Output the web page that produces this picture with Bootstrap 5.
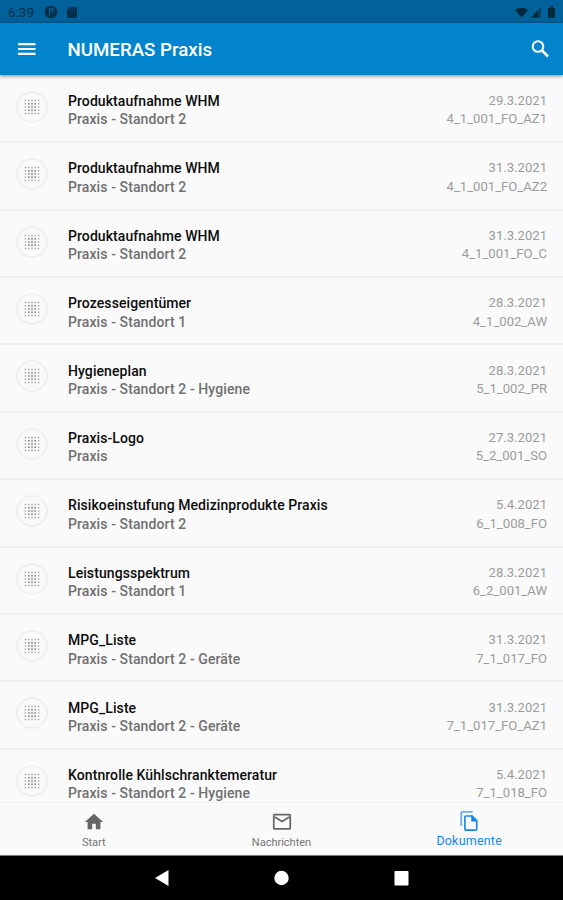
<!DOCTYPE html>
<html lang="de">
<head>
<meta charset="utf-8">
<meta name="viewport" content="width=device-width, initial-scale=1">
<title>NUMERAS Praxis</title>
<link href="https://cdn.jsdelivr.net/npm/bootstrap@5.3.0/dist/css/bootstrap.min.css" rel="stylesheet">
<style>
body{font-family:Roboto,"Liberation Sans",sans-serif;background:#fafafa;color:#111}
svg{display:block;flex:none}
.status{height:23px;background:#01619a;color:#04304a;font-size:13.5px;padding:1px 7px 0 8px}
.topbar{height:52px;background:#0284cd;box-shadow:0 1px 4px rgba(0,0,0,.5);padding:0 13px 0 16px;z-index:2}
.topbar h1{font-size:18.7px;font-weight:500;margin-left:31.5px;padding-top:2.5px}
.docs{padding-top:.9px}
.doc{height:67.4px;border-bottom:2px solid #f0f0f0;padding:16.2px 16px 0 16px;font-size:14px;line-height:18.3px}
.doc svg{margin-right:20px;margin-top:-1.2px}
.name{font-weight:500;color:#0c0c0c;letter-spacing:.08px}
.place{font-weight:500;color:#707070;letter-spacing:.1px}
.meta{color:#9c9c9c;font-size:13.1px}
.tabs{height:53px;border-top:1px solid #f1f1f1;background:#fafafa;font-size:11px}
.tabs a{color:#757575;line-height:14px;padding-top:8px}
.tabs a span{margin-top:2.5px}
.tabs a.active{color:#1686e8;font-size:12.5px;letter-spacing:.2px;padding-top:7px}
.tabs a.active span{margin-top:2px}
.sysnav{height:45px;background:#000;border-top:1px solid #777}
.sysnav svg{margin:0 49.5px 0}
</style>
<script src="https://cdn.jsdelivr.net/npm/bootstrap@5.3.0/dist/js/bootstrap.bundle.min.js"></script>
</head>
<body class="vh-100 overflow-hidden d-flex flex-column">
<svg class="d-none"><symbol id="doc-icon" viewBox="0 0 32 32"><circle cx="16" cy="16" r="15" fill="#fafafa" stroke="#f0f0f0" stroke-width="2"/><g stroke="#a6a6a6" stroke-width="1.4" stroke-dasharray="1.4 1.9"><path d="M8.700 9.500h15M8.700 12.700h15M8.700 16h15M8.700 19.200h15M8.700 22.500h15"/></g><path d="M12 12.700h8M12 16h8M12 19.200h8" stroke="#858585" stroke-width="1.400" stroke-dasharray="1.400 1.900"/><path d="M16 10v12M12 16h8" stroke="#c4c4c4" stroke-width=".8"/></symbol></svg>

<div class="status flex-shrink-0 d-flex align-items-center">
  <span>6:39</span>
  <svg class="ms-2" width="16" height="14" viewBox="-2 0 16 14"><circle cx="7" cy="7" r="6.300" fill="#042f48"/><path d="M5.500 10.500V4H9v2.500H7" fill="none" stroke="#01619a" stroke-width="1.300"/></svg>
  <svg class="ms-2" width="12" height="13" viewBox="0 0 12 13"><path d="M4 1h6q1 0 1 1v9q0 1-1 1H2q-1 0-1-1V4z" fill="#042f48"/><path d="M4.500 2.500v2M6.500 2.500v2M8.500 2.500v2" stroke="#01619a" stroke-width=".6"/></svg>
  <svg class="ms-auto" width="42" height="13" viewBox="0 0 42 13"><path d="M1 4Q7.500-.5 14 4L7.500 11.500z" fill="#042a3a"/><path d="M17 11.500 27 1v10.500z" fill="#034369"/><path d="M17 11.500 24 4.300v7.200z" fill="#042a3a"/><path d="M34 2H36V.5h3V2H41v10h-7z" fill="#042a3a"/></svg>
</div>
<header class="topbar flex-shrink-0 position-relative d-flex align-items-center text-white">
  <svg width="20" height="14" viewBox="0 0 20 14"><path d="M2 2.200h17.500M2 7h17.500M2 11.800h17.500" stroke="#fff" stroke-width="2.200"/></svg>
  <h1 class="mb-0">NUMERAS Praxis</h1>
  <svg class="ms-auto" width="20" height="20" viewBox="0 0 20 20" fill="none" stroke="#fff"><circle cx="8" cy="7.500" r="5.300" stroke-width="2"/><path d="m12 11.500 6 6" stroke-width="2.500"/></svg>
</header>

<main class="docs flex-grow-1 overflow-hidden">
  <div class="doc d-flex"><svg width="32" height="32"><use href="#doc-icon"/></svg><div><div class="name">Produktaufnahme WHM</div><div class="place">Praxis - Standort 2</div></div><div class="meta ms-auto text-end"><div>29.3.2021</div><div>4_1_001_FO_AZ1</div></div></div>
  <div class="doc d-flex"><svg width="32" height="32"><use href="#doc-icon"/></svg><div><div class="name">Produktaufnahme WHM</div><div class="place">Praxis - Standort 2</div></div><div class="meta ms-auto text-end"><div>31.3.2021</div><div>4_1_001_FO_AZ2</div></div></div>
  <div class="doc d-flex"><svg width="32" height="32"><use href="#doc-icon"/></svg><div><div class="name">Produktaufnahme WHM</div><div class="place">Praxis - Standort 2</div></div><div class="meta ms-auto text-end"><div>31.3.2021</div><div>4_1_001_FO_C</div></div></div>
  <div class="doc d-flex"><svg width="32" height="32"><use href="#doc-icon"/></svg><div><div class="name">Prozesseigentümer</div><div class="place">Praxis - Standort 1</div></div><div class="meta ms-auto text-end"><div>28.3.2021</div><div>4_1_002_AW</div></div></div>
  <div class="doc d-flex"><svg width="32" height="32"><use href="#doc-icon"/></svg><div><div class="name">Hygieneplan</div><div class="place">Praxis - Standort 2 - Hygiene</div></div><div class="meta ms-auto text-end"><div>28.3.2021</div><div>5_1_002_PR</div></div></div>
  <div class="doc d-flex"><svg width="32" height="32"><use href="#doc-icon"/></svg><div><div class="name">Praxis-Logo</div><div class="place">Praxis</div></div><div class="meta ms-auto text-end"><div>27.3.2021</div><div>5_2_001_SO</div></div></div>
  <div class="doc d-flex"><svg width="32" height="32"><use href="#doc-icon"/></svg><div><div class="name">Risikoeinstufung Medizinprodukte Praxis</div><div class="place">Praxis - Standort 2</div></div><div class="meta ms-auto text-end"><div>5.4.2021</div><div>6_1_008_FO</div></div></div>
  <div class="doc d-flex"><svg width="32" height="32"><use href="#doc-icon"/></svg><div><div class="name">Leistungsspektrum</div><div class="place">Praxis - Standort 1</div></div><div class="meta ms-auto text-end"><div>28.3.2021</div><div>6_2_001_AW</div></div></div>
  <div class="doc d-flex"><svg width="32" height="32"><use href="#doc-icon"/></svg><div><div class="name">MPG_Liste</div><div class="place">Praxis - Standort 2 - Geräte</div></div><div class="meta ms-auto text-end"><div>31.3.2021</div><div>7_1_017_FO</div></div></div>
  <div class="doc d-flex"><svg width="32" height="32"><use href="#doc-icon"/></svg><div><div class="name">MPG_Liste</div><div class="place">Praxis - Standort 2 - Geräte</div></div><div class="meta ms-auto text-end"><div>31.3.2021</div><div>7_1_017_FO_AZ1</div></div></div>
  <div class="doc d-flex"><svg width="32" height="32"><use href="#doc-icon"/></svg><div><div class="name">Kontnrolle Kühlschranktemeratur</div><div class="place">Praxis - Standort 2 - Hygiene</div></div><div class="meta ms-auto text-end"><div>5.4.2021</div><div>7_1_018_FO</div></div></div>
</main>

<nav class="tabs flex-shrink-0 row g-0 text-center">
  <a class="col d-flex flex-column align-items-center text-decoration-none" href="#"><svg width="22" height="22" viewBox="0 0 24 24"><path d="M10 20v-6h4v6h5v-8h3L12 3 2 12h3v8z" fill="#666"/></svg><span>Start</span></a>
  <a class="col d-flex flex-column align-items-center text-decoration-none" href="#"><svg width="22" height="22" viewBox="0 0 24 24" fill="none" stroke="#666" stroke-width="1.900"><rect x="3" y="4" width="18" height="15.500" rx="1"/><path d="m4 6.500 8 5 8-5"/></svg><span>Nachrichten</span></a>
  <a class="active col d-flex flex-column align-items-center text-decoration-none" href="#"><svg width="20" height="22" viewBox="0 0 22 23"><path d="M2.500 17V3q0-1.500 1.500-1.500h11" fill="none" stroke="#68aef0" stroke-width="2"/><path d="M7 6h7.500l5 5v9.500q0 1-1 1H7.500q-1 0-1-1V7q0-1 1-1z" fill="none" stroke="#1686e8" stroke-width="1.800"/><path d="M13.500 5.500v6.500H20z" fill="#1686e8"/></svg><span>Dokumente</span></a>
</nav>
<div class="sysnav flex-shrink-0 d-flex justify-content-center align-items-center">
  <svg width="21" height="20" viewBox="0 0 21 20"><path d="M17.500 2v16L4 10z" fill="#fff"/></svg>
  <svg width="21" height="20" viewBox="0 0 21 20"><circle cx="10.500" cy="10" r="7.200" fill="#fff"/></svg>
  <svg width="21" height="20" viewBox="0 0 21 20"><rect x="3.500" y="3" width="14" height="14.500" rx=".7" fill="#fff"/></svg>
</div>
</body>
</html>
